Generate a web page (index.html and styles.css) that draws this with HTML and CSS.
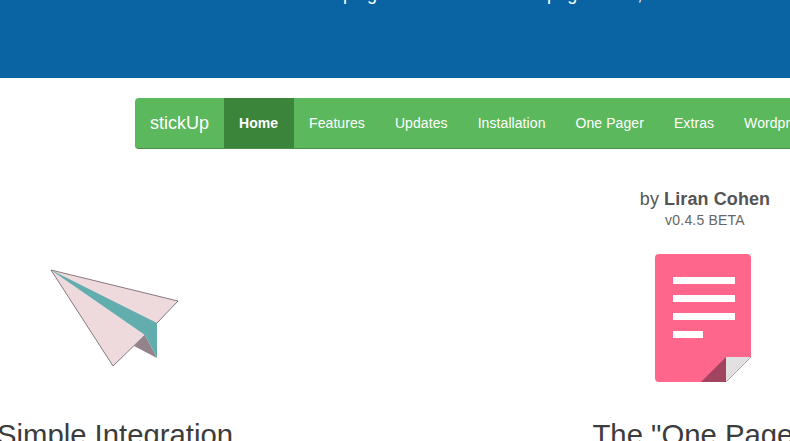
FILE: index.html
```html
<!DOCTYPE html>
<html lang="en">
<head>
<meta charset="utf-8">
<title>stickUp</title>
<link rel="stylesheet" href="styles.css">
</head>
<body>
<header class="hero">
  <p class="hero-text">This plugin works on the main page menu, but has additional</p>
</header>
<nav class="navbar">
  <a class="brand" href="#">stickUp</a>
  <ul class="nav-list">
    <li><a class="nav-link active" href="#">Home</a></li>
    <li><a class="nav-link" href="#">Features</a></li>
    <li><a class="nav-link" href="#">Updates</a></li>
    <li><a class="nav-link" href="#">Installation</a></li>
    <li><a class="nav-link" href="#">One Pager</a></li>
    <li><a class="nav-link" href="#">Extras</a></li>
    <li><a class="nav-link" href="#">Wordpress</a></li>
  </ul>
</nav>
<main class="features">
  <section class="feature">
    <svg class="icon" width="130" height="128" viewBox="0 0 130 128" aria-hidden="true">
      <path d="M1 16 L128 47 L107 69 L95 81 L63 112 Z" fill="#eed9dd" stroke="#54494d" stroke-width=".7"/>
      <path d="M95 81 L107 104 L84 92 Z" fill="#94838b"/>
      <path d="M1 16 L107 69 L107 104 L95 81 Z" fill="#62adad"/>
    </svg>
    <h2 class="feature-title">Simple Integration</h2>
  </section>
  <section class="feature">
    <p class="byline">by <strong>Liran Cohen</strong></p>
    <p class="version">v0.4.5 BETA</p>
    <svg class="icon icon-doc" width="96" height="128" viewBox="0 0 96 128" aria-hidden="true">
      <path d="M4 0 H92 A4 4 0 0 1 96 4 V103 L71 128 H4 A4 4 0 0 1 0 124 V4 A4 4 0 0 1 4 0 Z" fill="#ff668c"/>
      <rect class="doc-line" x="18" y="23" width="62" height="7"/>
      <rect class="doc-line" x="18" y="41" width="62" height="7"/>
      <rect class="doc-line" x="18" y="59" width="62" height="7"/>
      <rect class="doc-line" x="18" y="77" width="30" height="7"/>
      <path d="M46 128 L71 103 V128 Z" fill="#a2435f"/>
      <path d="M71 103 H96 L71 128 Z" fill="#e2e0e1"/>
      <path d="M96 103 L71 128" stroke="#9a9698" stroke-width=".7" fill="none"/>
    </svg>
    <h2 class="feature-title feature-title-right">The "One Pager"</h2>
  </section>
</main>
</body>
</html>
```
FILE: styles.css
```css
html, body {
  margin: 0;
  padding: 0;
  height: 441px;
  overflow: hidden;
  background: #fff;
  font-family: "Liberation Sans", Arial, sans-serif;
  color: #333;
}
.hero {
  height: 78px;
  background: #0a64a4;
  overflow: hidden;
  padding-left: 304px;
}
.hero-text {
  margin: -17px 0 0;
  width: 900px;
  font-size: 18px;
  line-height: 22px;
  color: #fff;
}
.navbar {
  display: flex;
  align-items: stretch;
  box-sizing: border-box;
  width: 900px;
  height: 51px;
  margin: 20px 0 0 135px;
  background: #5cb85c;
  border-bottom: 1px solid #4a8f4a;
  border-radius: 4px;
}
.brand {
  padding: 0 15px;
  font-size: 18px;
  line-height: 50px;
  color: #fff;
  text-decoration: none;
}
.nav-list {
  display: flex;
  margin: 0;
  padding: 0;
  list-style: none;
}
.nav-link {
  display: block;
  padding: 0 15px;
  font-size: 14px;
  letter-spacing: .08px;
  line-height: 50px;
  color: #fff;
  text-decoration: none;
}
.nav-link.active {
  box-sizing: border-box;
  width: 70px;
  height: 50px;
  background: #3b853b;
  font-weight: bold;
  letter-spacing: 0;
}
.features {
  display: flex;
  gap: 310px;
  width: 900px;
  margin: 40px 0 0 -25px;
  height: 260px;
}
.feature {
  display: flex;
  flex: 0 0 280px;
  flex-direction: column;
  justify-content: flex-end;
  align-items: center;
  text-align: center;
}
.byline {
  margin: 0;
  font-size: 18px;
  letter-spacing: .1px;
  line-height: 20px;
  color: #555;
}
.version {
  margin: 1px 0 0;
  font-size: 14px;
  letter-spacing: .2px;
  line-height: 20px;
  color: #666;
}
.icon {
  display: block;
  margin-top: 24px;
}
.icon-doc {
  margin-right: 4px;
}
.doc-line {
  fill: #fff;
}
.feature-title {
  margin: 36px 0 -2px;
  font-size: 29.3px;
  font-weight: 400;
  line-height: 33px;
  white-space: nowrap;
  color: #3c3c3c;
}
.feature-title-right {
  margin-right: 4px;
}
```
